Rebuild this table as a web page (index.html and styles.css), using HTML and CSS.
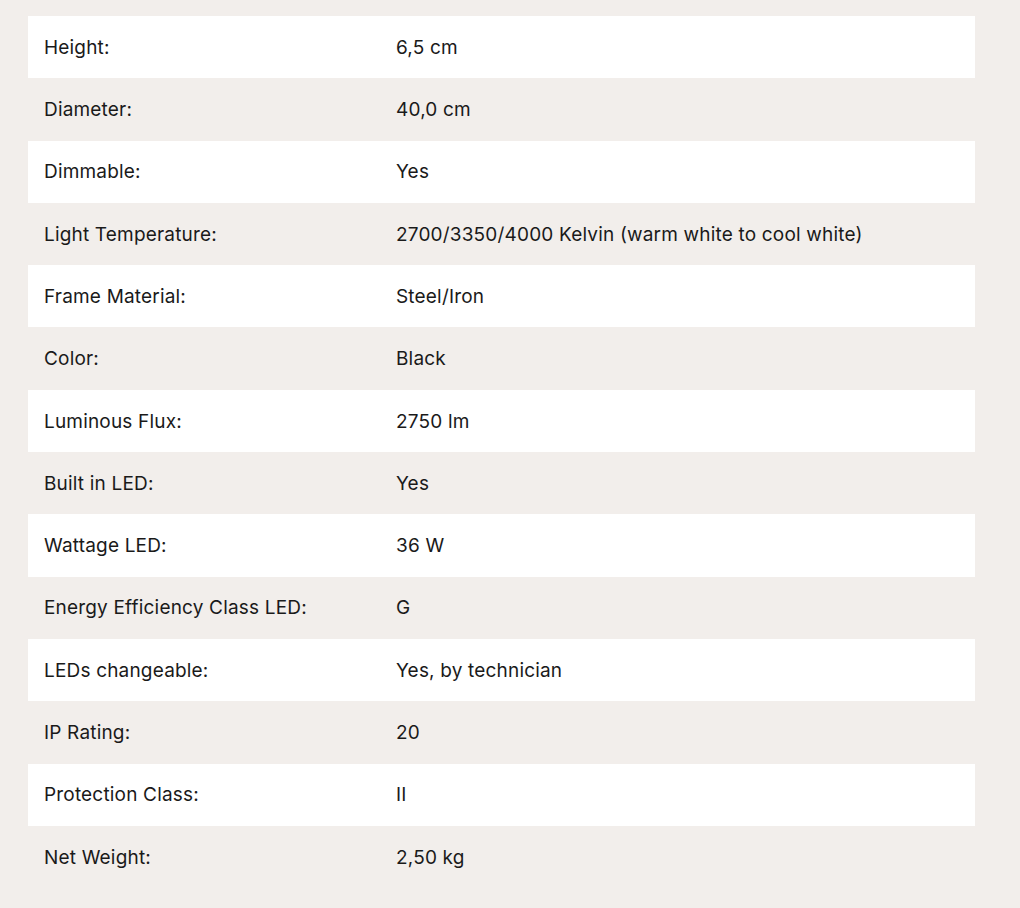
FILE: index.html
```html
<!DOCTYPE html>
<html lang="en">
<head>
<meta charset="utf-8">
<link rel="stylesheet" href="styles.css">
</head>
<body>
<table class="specs">
<tbody>
<tr><td class="label">Height:</td><td class="value">6,5 cm</td></tr>
<tr><td class="label">Diameter:</td><td class="value">40,0 cm</td></tr>
<tr><td class="label">Dimmable:</td><td class="value">Yes</td></tr>
<tr><td class="label">Light Temperature:</td><td class="value">2700/3350/4000 Kelvin (warm white to cool white)</td></tr>
<tr><td class="label">Frame Material:</td><td class="value">Steel/Iron</td></tr>
<tr><td class="label">Color:</td><td class="value">Black</td></tr>
<tr><td class="label">Luminous Flux:</td><td class="value">2750 lm</td></tr>
<tr><td class="label">Built in LED:</td><td class="value">Yes</td></tr>
<tr><td class="label">Wattage LED:</td><td class="value">36 W</td></tr>
<tr><td class="label">Energy Efficiency Class LED:</td><td class="value">G</td></tr>
<tr><td class="label">LEDs changeable:</td><td class="value">Yes, by technician</td></tr>
<tr><td class="label">IP Rating:</td><td class="value">20</td></tr>
<tr><td class="label">Protection Class:</td><td class="value">II</td></tr>
<tr><td class="label">Net Weight:</td><td class="value">2,50 kg</td></tr>
</tbody>
</table>
</body>
</html>
```
FILE: styles.css
```css
html, body {
  margin: 0;
  background: #f2eeeb;
}
body {
  padding: 16px 45px 0 28px;
  font-family: Inter, "Noto Sans", sans-serif;
  font-size: 19px;
  letter-spacing: 0.18px;
  color: #1a1a1a;
}
.specs {
  width: 947px;
  border-collapse: collapse;
}
.specs tr {
  height: 62.3px;
}
.specs tr:nth-child(odd) {
  background: #ffffff;
}
.specs td {
  padding: 2px 0 0 16px;
  vertical-align: middle;
  line-height: 1.2;
}
.specs .label {
  width: 352px;
}
.specs .value {
  padding-left: 0;
}
```
